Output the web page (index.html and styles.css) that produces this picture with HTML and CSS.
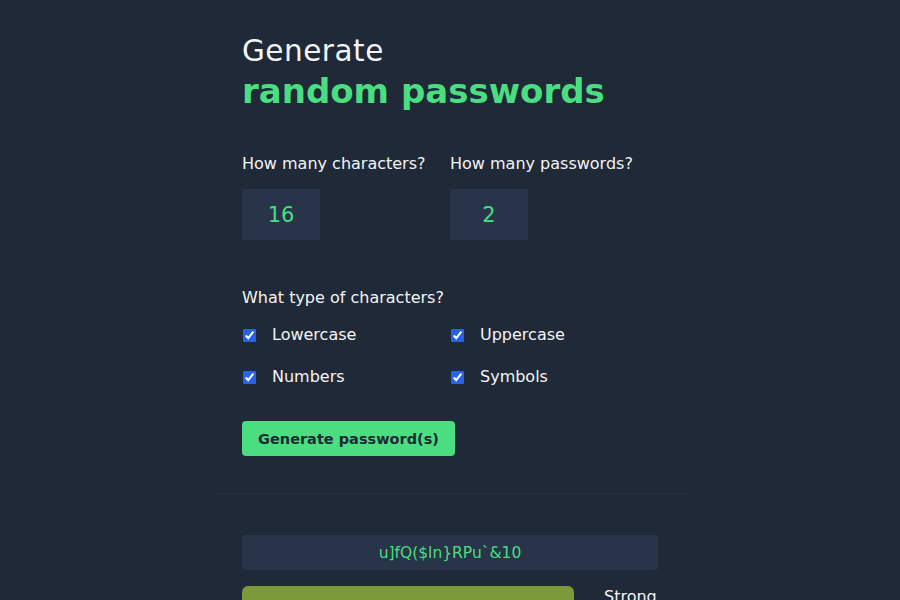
FILE: index.html
```html
<!DOCTYPE html>
<html lang="en">
<head>
<meta charset="utf-8">
<title>Password Generator</title>
<link rel="stylesheet" href="styles.css">
</head>
<body>
<main class="container">
  <section class="generator">
    <h1 class="title">
      <span class="title-light">Generate</span>
      <span class="title-bold">random passwords</span>
    </h1>

    <div class="grid numbers-row">
      <div class="field">
        <label class="label" for="len">How many characters?</label>
        <input class="num-input" id="len" type="text" value="16">
      </div>
      <div class="field">
        <label class="label" for="count">How many passwords?</label>
        <input class="num-input" id="count" type="text" value="2">
      </div>
    </div>

    <p class="label types-label">What type of characters?</p>
    <div class="grid checks">
      <label class="check"><input type="checkbox" checked><span>Lowercase</span></label>
      <label class="check"><input type="checkbox" checked><span>Uppercase</span></label>
      <label class="check"><input type="checkbox" checked><span>Numbers</span></label>
      <label class="check"><input type="checkbox" checked><span>Symbols</span></label>
    </div>

    <button class="btn" type="button">Generate password(s)</button>
  </section>

  <hr class="divider">

  <section class="results">
    <div class="password">u]fQ($ln}RPu`&amp;10</div>
    <div class="strength">
      <div class="bar"></div>
      <span class="strength-label">Strong</span>
    </div>
  </section>
</main>
</body>
</html>
```

FILE: styles.css
```css
* { box-sizing: border-box; }

html, body {
  margin: 0;
  height: 100%;
}

body {
  background: #1f2937;
  color: #f3f4f6;
  font-family: "DejaVu Sans", "Open Sans", sans-serif;
  overflow: hidden;
}

.container {
  width: 472px;
  margin: 0 auto;
}

.generator {
  padding: 31px 27px 37px 28px;
}

.title {
  margin: 0;
  font-weight: 400;
  display: flex;
  flex-direction: column;
}

.title-light {
  font-size: 29.5px;
  line-height: 40px;
  color: #f3f4f6;
  letter-spacing: 0.5px;
}

.title-bold {
  font-size: 34px;
  line-height: 40px;
  font-weight: 700;
  color: #4ade80;
}

.grid {
  display: grid;
  grid-template-columns: 208px 208px;
}

.numbers-row {
  margin-top: 42px;
}

.field {
  display: flex;
  flex-direction: column;
}

.label {
  font-size: 16px;
  line-height: 22px;
  color: #f3f4f6;
  margin: 0;
}

.num-input {
  margin-top: 14px;
  width: 78px;
  height: 51px;
  border: none;
  background: #273449;
  color: #4ade80;
  font-family: inherit;
  font-size: 21px;
  text-align: center;
  padding: 0;
  outline: none;
}

.types-label {
  margin-top: 47px;
}

.checks {
  margin-top: 15px;
  row-gap: 20px;
}

.check {
  display: flex;
  align-items: center;
  font-size: 16px;
  line-height: 22px;
  color: #f3f4f6;
}

.check input {
  width: 13px;
  height: 13px;
  margin: 0 16px 0 1px;
  accent-color: #2563eb;
}

.btn {
  margin-top: 33px;
  width: 213px;
  height: 35px;
  border: none;
  border-radius: 4px;
  background: #4ade80;
  color: #1f2937;
  font-family: inherit;
  font-weight: 700;
  font-size: 14.5px;
  padding: 0;
}

.divider {
  margin: 0 0 0 1px;
  border: none;
  border-top: 1px solid #263243;
}

.results {
  padding: 41px 27px 0 28px;
}

.password {
  width: 416px;
  height: 35px;
  border-radius: 3px;
  background: #273449;
  color: #4ade80;
  font-size: 15.5px;
  display: flex;
  align-items: center;
  justify-content: center;
}

.strength {
  margin-top: 16px;
  display: flex;
  align-items: center;
  gap: 30px;
}

.bar {
  width: 332px;
  height: 20px;
  border-radius: 6px;
  background: #7d9a3b;
}

.strength-label {
  font-size: 16px;
  color: #f3f4f6;
}
```
